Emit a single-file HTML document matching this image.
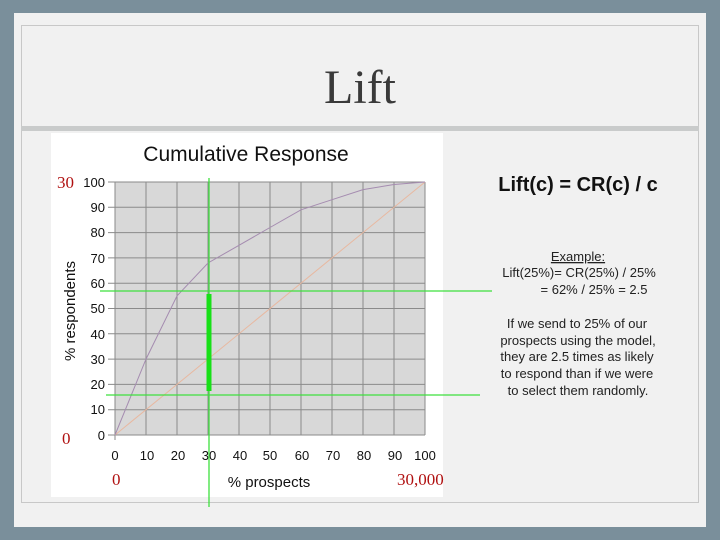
<!DOCTYPE html>
<html><head><style>
body{margin:0;width:720px;height:540px;background:#7a8f9b;position:relative;overflow:hidden;font-family:"Liberation Sans",sans-serif}
.slide{position:absolute;left:14px;top:13px;width:692px;height:514px;background:#f1f1f1}
.t{position:absolute;font-family:"Liberation Sans",sans-serif;color:#111}
</style></head><body>
<div class="slide"></div>
<svg width="720" height="540" style="position:absolute;left:0;top:0" font-family="Liberation Sans, sans-serif">
<rect x="21.5" y="25.5" width="677" height="477" fill="none" stroke="#c8c8c8"/>
<rect x="21" y="126" width="678" height="5" fill="#c9cbcb"/>
<text x="360" y="103" text-anchor="middle" font-family="Liberation Serif, serif" font-size="48" fill="#3a3a3a">Lift</text>
<rect x="51" y="133" width="392" height="364" fill="#fff"/>
<text x="246" y="161" text-anchor="middle" font-size="21" fill="#111">Cumulative Response</text>
<rect x="115" y="182" width="310" height="253" fill="#d8d8d8"/>
<g stroke="#8a8a8a" stroke-width="1">
<path d="M146 182V435M177 182V435M208 182V435M239 182V435M270 182V435M301 182V435M332 182V435M363 182V435M394 182V435M425 182V435M115 182V440"/>
<path d="M108 182H425M108 207.3H425M108 232.6H425M108 257.9H425M108 283.2H425M108 308.5H425M108 333.8H425M108 359.1H425M108 384.4H425M108 409.7H425M108 435H425"/>
</g>
<path d="M115 435L425 182" stroke="#e8b8a0" stroke-width="1" fill="none"/>
<polyline points="115,435 146,359.1 177,295.9 208,263 239,245.3 270,227.5 301,209.8 332,199.7 363,189.6 394,184.5 425,182" stroke="#a58cb0" stroke-width="1" fill="none"/>
<g font-size="13" fill="#111" text-anchor="end">
<text x="105" y="187">100</text><text x="105" y="212">90</text><text x="105" y="237">80</text><text x="105" y="263">70</text><text x="105" y="288">60</text><text x="105" y="313">50</text><text x="105" y="339">40</text><text x="105" y="364">30</text><text x="105" y="389">20</text><text x="105" y="414">10</text><text x="105" y="440">0</text>
</g>
<g font-size="13" fill="#111" text-anchor="middle">
<text x="115" y="460">0</text><text x="147" y="460">10</text><text x="178" y="460">20</text><text x="209" y="460">30</text><text x="240" y="460">40</text><text x="270" y="460">50</text><text x="302" y="460">60</text><text x="333" y="460">70</text><text x="364" y="460">80</text><text x="395" y="460">90</text><text x="425" y="460">100</text>
</g>
<text x="269" y="487" text-anchor="middle" font-size="15" fill="#111">% prospects</text>
<text transform="translate(75,311) rotate(-90)" text-anchor="middle" font-size="15" fill="#111">% respondents</text>
<g font-family="Liberation Serif, serif" font-size="17" fill="#b01010">
<text x="57" y="188">30</text><text x="62" y="444">0</text><text x="112" y="485">0</text><text x="397" y="485">30,000</text>
</g>
<g stroke="#3ee03e" stroke-width="1.3">
<path d="M209 178V507M100 291H492M106 395H480"/>
</g>
<rect x="206.5" y="294" width="5" height="97" fill="#18e018"/>
<text x="578" y="191" text-anchor="middle" font-size="20" font-weight="bold" fill="#111">Lift(c) = CR(c) / c</text>
<g font-size="13" fill="#222" text-anchor="middle">
<text x="578" y="261" text-decoration="underline">Example:</text>
<text x="579" y="277">Lift(25%)= CR(25%) / 25%</text>
<text x="594" y="294">= 62% / 25% = 2.5</text>
<text x="577" y="328">If we send to 25% of our</text>
<text x="578" y="345">prospects using the model,</text>
<text x="577" y="361">they are 2.5 times as likely</text>
<text x="577" y="378">to respond than if we were</text>
<text x="578" y="395">to select them randomly.</text>
</g>
</svg>
</body></html>
